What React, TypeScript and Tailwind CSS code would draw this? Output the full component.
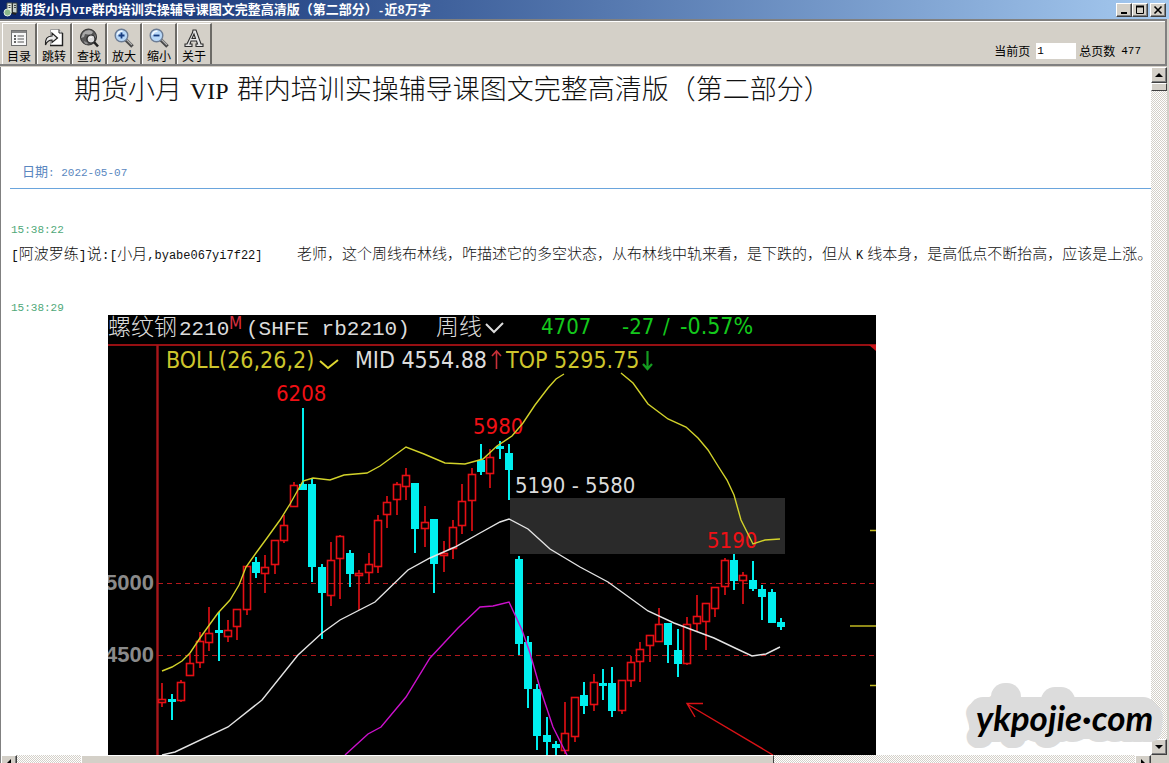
import type { ReactNode } from "react";

interface ToolButtonProps {
  label: string;
  children: ReactNode;
}

// [direction, body top, body bottom, wick top, wick bottom]
type Candle = ["up" | "down", number, number, number, number];

const candles: Candle[] = [
  ["up", 699, 703, 683, 707],
  ["down", 699, 701, 694, 720],
  ["up", 682, 701, 680, 702],
  ["up", 663, 676, 654, 676],
  ["up", 641, 663, 632, 668],
  ["up", 633, 643, 607, 651],
  ["down", 630, 632, 612, 661],
  ["up", 630, 637, 620, 642],
  ["up", 609, 627, 609, 640],
  ["up", 566, 610, 566, 615],
  ["down", 562, 573, 557, 578],
  ["up", 567, 574, 555, 593],
  ["up", 540, 565, 540, 574],
  ["up", 525, 541, 515, 543],
  ["up", 485, 507, 482, 507],
  ["down", 484, 490, 408, 490],
  ["down", 484, 567, 478, 582],
  ["down", 567, 593, 564, 639],
  ["up", 560, 596, 542, 606],
  ["up", 536, 559, 535, 599],
  ["down", 553, 574, 550, 587],
  ["up", 573, 575, 570, 610],
  ["up", 564, 573, 553, 583],
  ["up", 520, 567, 515, 573],
  ["up", 502, 515, 496, 528],
  ["up", 484, 500, 482, 515],
  ["up", 475, 487, 468, 500],
  ["down", 483, 529, 483, 553],
  ["up", 522, 529, 506, 547],
  ["down", 519, 564, 519, 593],
  ["up", 553, 555, 541, 572],
  ["up", 527, 549, 520, 559],
  ["up", 501, 526, 484, 534],
  ["up", 474, 501, 468, 531],
  ["down", 460, 472, 444, 475],
  ["up", 457, 474, 449, 488],
  ["down", 446, 448, 441, 459],
  ["down", 453, 470, 444, 500],
  ["down", 559, 644, 556, 655],
  ["down", 642, 689, 636, 708],
  ["down", 689, 736, 684, 750],
  ["down", 735, 742, 717, 756],
  ["down", 744, 748, 741, 756],
  ["up", 733, 751, 702, 754],
  ["up", 697, 737, 697, 742],
  ["down", 695, 706, 682, 714],
  ["up", 682, 705, 674, 711],
  ["down", 683, 685, 669, 700],
  ["down", 683, 711, 667, 717],
  ["up", 680, 711, 680, 714],
  ["up", 662, 681, 656, 687],
  ["up", 649, 662, 642, 682],
  ["up", 635, 646, 635, 662],
  ["up", 624, 642, 608, 642],
  ["down", 623, 645, 623, 663],
  ["down", 650, 664, 629, 677],
  ["up", 624, 664, 617, 665],
  ["up", 616, 624, 595, 632],
  ["up", 603, 622, 603, 650],
  ["up", 587, 609, 587, 617],
  ["up", 560, 587, 558, 595],
  ["down", 560, 581, 554, 590],
  ["up", 575, 581, 572, 604],
  ["down", 580, 589, 561, 591],
  ["down", 589, 597, 585, 620],
  ["down", 592, 623, 589, 623],
  ["down", 622, 627, 618, 630],
];

const upperBand =
  "162,671 172,667 182,661 190,653 200,638 210,624 218,613 230,600 239,585 246,567 256,553 267,538 280,520 290,504 303,481 313,478 330,480 344,475 367,473 380,466 406,447 424,454 445,463 465,464 483,459 497,446 512,436 523,423 535,405 548,388 556,379 564,374";
const upperBandTail =
  "621,373 633,383 648,404 668,419 686,427 698,438 708,450 718,466 727,480 734,495 741,520 753,544 765,540 780,539";
const middleBand =
  "162,755 175,752 228,727 262,700 298,655 322,633 340,620 375,602 408,570 430,558 455,547 480,533 500,522 509,519 528,529 550,549 580,567 608,582 648,611 674,623 714,638 735,648 752,656 766,654 780,647";
const lowerBand =
  "345,755 368,734 381,727 406,697 430,658 458,628 480,607 493,606 509,602 522,630 530,653 540,688 553,727 567,755";

function CandleShape({ candle, index }: { candle: Candle; index: number }) {
  const [dir, top, bottom, high, low] = candle;
  const x = Math.round(162.3 + index * 9.374);

  if (dir === "down") {
    return (
      <g fill="#00efef">
        <rect x={x - 1} y={high} width="2" height={low - high} />
        <rect x={x - 4} y={top} width="8" height={Math.max(bottom - top, 3)} />
      </g>
    );
  }
  return (
    <g stroke="#e60f14" strokeWidth="1.6" fill="none">
      <path d={`M${x} ${high}V${top}M${x} ${bottom}V${low}`} />
      <rect x={x - 3.5} y={top + 0.5} width="7" height={Math.max(bottom - top - 1, 2)} />
    </g>
  );
}

function FuturesChart() {
  return (
    <svg
      className="block shrink-0 bg-black font-['DejaVu_Sans_Condensed','Noto_Sans',sans-serif]"
      width="768"
      height="440"
      viewBox="108 315 768 440"
      role="img"
      aria-label="螺纹钢2210 周线"
    >
      <rect x="510" y="498" width="275" height="56" fill="#2a2a2a" />
      <g stroke="#b4181c" strokeWidth="1.2" strokeDasharray="5 4">
        <path d="M158 583.5H876" />
        <path d="M158 655.5H876" />
      </g>
      <path d="M108 345H876" stroke="#c81418" strokeWidth="1.6" />
      <path d="M157.5 345V755" stroke="#a8161a" strokeWidth="2.4" />
      <path d="M869 345H876V351Z" fill="#c81418" />

      <g fill="#8a8a8a" fontSize="22" fontWeight="700" fontFamily="Liberation Sans, sans-serif">
        <text x="105" y="590">5000</text>
        <text x="105" y="662">4500</text>
      </g>

      {candles.map((candle, i) => (
        <CandleShape key={i} candle={candle} index={i} />
      ))}

      <g fill="#f01015" fontSize="22">
        <text x="276" y="401">6208</text>
        <text x="473" y="434">5980</text>
        <text x="707" y="548">5190</text>
      </g>

      <g fill="none" strokeWidth="1.4">
        <polyline points={upperBand} stroke="#d2d22a" />
        <polyline points={upperBandTail} stroke="#d2d22a" />
        <polyline points={middleBand} stroke="#e4e4e4" />
        <polyline points={lowerBand} stroke="#cc10cc" />
      </g>
      <g stroke="#c0b820" strokeWidth="1.6">
        <path d="M870 530.5H876M850 626H876M870 685.5H876" />
      </g>
      <path d="M773 755L687 704M703 703.5H687L695 717" stroke="#d81216" strokeWidth="1.4" fill="none" />

      <g fill="#dcdcdc">
        <text x="108" y="335" fontSize="23" fontFamily="Noto Sans CJK SC, sans-serif" fontWeight="300">
          螺纹钢
        </text>
        <text x="179" y="335" fontSize="21" fontFamily="Liberation Mono, monospace">2210</text>
        <text x="246" y="335" fontSize="21" fontFamily="Liberation Mono, monospace">(SHFE rb2210)</text>
        <text x="436" y="335" fontSize="23" fontFamily="Noto Sans CJK SC, sans-serif" fontWeight="300">
          周线
        </text>
        <text x="355" y="368" fontSize="23">MID 4554.88</text>
        <text x="515" y="493" fontSize="22">5190 - 5580</text>
      </g>
      <text x="229" y="329" fontSize="17" fill="#d83040">M</text>
      <path d="M486 324L494 332L503 323" stroke="#dcdcdc" strokeWidth="2" fill="none" />
      <g fill="#14c81c" fontSize="22">
        <text x="541" y="334">4707</text>
        <text x="622" y="334">-27</text>
        <text x="663" y="334">/</text>
        <text x="680" y="334" fontSize="23">-0.57%</text>
      </g>
      <g fill="#cdc52c" fontSize="23">
        <text x="166" y="368">BOLL(26,26,2)</text>
        <text x="506" y="368">TOP 5295.75</text>
      </g>
      <path d="M320 361L328 368L338 360" stroke="#e0d830" strokeWidth="2" fill="none" />
      <path d="M496.500 369V352M492 356L496.500 351L501 356" stroke="#c83038" strokeWidth="1.6" fill="none" />
      <path d="M647.500 351V368M643 364L647.500 369L652 364" stroke="#149c20" strokeWidth="2.2" fill="none" />
    </svg>
  );
}

function AppIcon() {
  return (
    <svg width="16" height="16" viewBox="0 0 16 16" aria-hidden="true">
      <path d="M4 1h5v10H4z" fill="#e8ece4" stroke="#505850" />
      <path d="M9.500 1h4.500v10H9.500z" fill="#c4ccc8" stroke="#303838" />
      <path d="M5.500 3.500h2M5.500 5.500h2M11 3.500h2M11 5.500h2" stroke="#404848" />
      <circle cx="4.500" cy="10.500" r="3.500" fill="#8cb88c" stroke="#e4f0e4" />
      <path d="M9 11l4 1" stroke="#202020" strokeWidth="2" />
    </svg>
  );
}

function ContentsIcon() {
  return (
    <svg width="20" height="20" viewBox="0 0 20 20" aria-hidden="true">
      <rect x="2.500" y="2.500" width="15" height="15" fill="#f8f8f8" stroke="#707070" />
      <path d="M3 4h14" stroke="#888" strokeWidth="2" />
      <path d="M5 8h2M5 11h2M5 14h2" stroke="#333" strokeWidth="1.6" />
      <path d="M8.500 8H15M8.500 11H15M8.500 14H15" stroke="#555" strokeWidth="1.2" />
    </svg>
  );
}

function JumpIcon() {
  return (
    <svg width="20" height="20" viewBox="0 0 20 20" aria-hidden="true">
      <path d="M6.500 1.500H15L18.500 5V17.500H6.500Z" fill="#fff" stroke="#a0a0a0" />
      <path d="M18.500 5V17.500H6" fill="none" stroke="#222" strokeWidth="1.4" />
      <path d="M15 1.500V5H18.500" fill="none" stroke="#222" />
      <path
        d="M1.500 17C1 11 3 8 8 8V5L13.500 10L8 14.500V12C4.500 12 3 13.500 1.500 17Z"
        fill="#ececec"
        stroke="#222"
        strokeWidth="1.2"
      />
    </svg>
  );
}

function FindIcon() {
  return (
    <svg width="20" height="20" viewBox="0 0 20 20" aria-hidden="true">
      <circle cx="9.500" cy="9" r="8" fill="#585858" stroke="#333" />
      <path d="M4 5C6 2 11 1 14 4L12 7L6 6L5 9L2 10Z" fill="#a8a8a8" />
      <path d="M5 13L9 15L8 16.500C6 16 5 15 5 13ZM16 6l1 4-2-1z" fill="#909090" />
      <path d="M15 14L19 18.500" stroke="#222" strokeWidth="2.600" />
      <circle cx="12" cy="11" r="4" fill="#dcdcdc" stroke="#222" strokeWidth="1.2" />
      <path d="M10 10.500C10.500 9.500 12 9 13 9.500" stroke="#fff" fill="none" />
    </svg>
  );
}

function ZoomIcon({ plus }: { plus?: boolean }) {
  return (
    <svg width="20" height="20" viewBox="0 0 20 20" aria-hidden="true">
      <path d="M12 12L18.500 18.500" stroke="#484848" strokeWidth="3.600" />
      <path d="M12.500 11.500L18 17" stroke="#b0b0b0" strokeWidth="1.2" />
      <circle cx="7.500" cy="7.500" r="6.300" fill="#b8d8f8" stroke="#6c7c94" strokeWidth="1.4" />
      <path d="M3.500 7C4 4.500 6 3 8.500 3.300" stroke="#f4faff" strokeWidth="1.6" fill="none" />
      <path d={plus ? "M4.500 7.500H10.500M7.500 4.500V10.500" : "M4.500 7.500H10.500"} stroke="#163c80" strokeWidth="1.8" />
    </svg>
  );
}

function AboutIcon() {
  return (
    <svg width="20" height="20" viewBox="0 0 20 20" aria-hidden="true">
      <path
        d="M9 2H12L17 16H19V18.500H12V16H13.500L12.500 13H7L6 16H8V18.500H1V16H3L8.500 4.500ZM8 10.500H11.500L10 6Z"
        fill="#e4e4e4"
        stroke="#2c2c2c"
        strokeWidth="1.1"
        fillRule="evenodd"
      />
    </svg>
  );
}

function ToolButton({ label, children }: ToolButtonProps) {
  return (
    <button
      type="button"
      className="flex w-[35px] flex-col items-center justify-end border-t border-r-2 border-l border-t-white border-r-[#6c6a66] border-l-white"
    >
      {children}
      <span className="text-xs leading-4 text-black">{label}</span>
    </button>
  );
}

function BevelButton({ label, className = "", children }: ToolButtonProps & { className?: string }) {
  return (
    <button
      type="button"
      aria-label={label}
      className={`flex shrink-0 items-center justify-center border border-t-white border-r-[#404040] border-b-[#404040] border-l-white bg-[#d4d0c8] shadow-[inset_-1px_-1px_0_#808080] ${className}`}
    >
      {children}
    </button>
  );
}

function Arrow({ d }: { d: string }) {
  return (
    <svg width="8" height="8" viewBox="0 0 8 8" aria-hidden="true">
      <path d={d} fill="#000" />
    </svg>
  );
}

function TitleBar() {
  return (
    <header className="flex h-[19px] shrink-0 items-center bg-linear-to-r from-[#0a246a] to-[#a6caf0] px-[3px]">
      <AppIcon />
      <h1 className="ml-px flex-1 text-[13px] leading-[19px] font-bold whitespace-nowrap text-white">
        期货小月
        <span className="font-['Liberation_Mono',monospace] text-[11px]">VIP</span>
        群内培训实操辅导课图文完整高清版（第二部分）
        <span className="font-['Liberation_Mono',monospace] text-[11px]">-</span>近
        <span className="font-['Liberation_Mono',monospace] text-[12px]">8</span>万字
      </h1>
      <BevelButton label="最小化" className="h-[14px] w-4">
        <svg width="10" height="10" viewBox="0 0 10 10" aria-hidden="true">
          <path d="M2 8H8" stroke="#000" strokeWidth="2" />
        </svg>
      </BevelButton>
      <BevelButton label="最大化" className="h-[14px] w-4">
        <svg width="10" height="10" viewBox="0 0 10 10" aria-hidden="true">
          <path d="M1.500 1V8.500H8.500V1" stroke="#000" fill="none" />
          <path d="M1 1.500H9" stroke="#000" strokeWidth="2" />
        </svg>
      </BevelButton>
      <BevelButton label="关闭" className="ml-0.5 h-[14px] w-4">
        <svg width="10" height="10" viewBox="0 0 10 10" aria-hidden="true">
          <path d="M1.500 1.500L8.500 8.500M8.500 1.500L1.500 8.500" stroke="#000" strokeWidth="1.6" />
        </svg>
      </BevelButton>
    </header>
  );
}

function Toolbar() {
  return (
    <div className="mr-0.5 flex h-[47px] shrink-0 border-t-2 border-r-2 border-b-2 border-[#808080] bg-[#d4d0c8]">
      <div className="flex flex-1 justify-between border-t border-white pt-px pl-0.5">
        <nav className="flex" aria-label="工具栏">
          <ToolButton label="目录">
            <ContentsIcon />
          </ToolButton>
          <ToolButton label="跳转">
            <JumpIcon />
          </ToolButton>
          <ToolButton label="查找">
            <FindIcon />
          </ToolButton>
          <ToolButton label="放大">
            <ZoomIcon plus />
          </ToolButton>
          <ToolButton label="缩小">
            <ZoomIcon />
          </ToolButton>
          <ToolButton label="关于">
            <AboutIcon />
          </ToolButton>
        </nav>
        <div className="mt-5 mr-6 flex h-4 items-center text-xs leading-4">
          <label htmlFor="page" className="mr-1.5">
            当前页
          </label>
          <input
            id="page"
            defaultValue="1"
            className="mr-[3px] h-4 w-10 bg-white pl-px font-['Liberation_Mono',monospace] text-[11px] outline-none"
          />
          <span>总页数</span>
          <span className="ml-1.5 font-['Liberation_Mono',monospace] text-[11px]">477</span>
        </div>
      </div>
    </div>
  );
}

function Watermark() {
  return (
    <svg
      className="pointer-events-none absolute right-1.5 bottom-1.5 font-['Lato','Open_Sans',sans-serif]"
      width="204"
      height="78"
      viewBox="0 0 204 78"
      aria-label="ykpojie.com"
    >
      <g fill="#dcdcdc">
        <rect x="10" y="18" width="188" height="42" rx="14" />
        <rect x="32" y="4" width="30" height="40" rx="14" />
        <rect x="82" y="8" width="34" height="40" rx="14" />
      </g>
      <text
        x="17"
        y="52"
        fontSize="35"
        fontStyle="italic"
        fontWeight="700"
        fill="#000"
        stroke="#dcdcdc"
        strokeWidth="22"
        strokeLinejoin="round"
        paintOrder="stroke"
      >
        ykpojie·com
      </text>
    </svg>
  );
}

export default function App() {
  return (
    <div className="relative flex h-screen flex-col overflow-hidden bg-[#d4d0c8] font-['Noto_Sans_CJK_SC',sans-serif] text-black">
      <TitleBar />
      <Toolbar />

      <div className="mt-px mr-0.5 flex min-h-0 flex-1 border-l border-[#808080]">
        <main className="min-w-0 flex-1 overflow-hidden bg-white pl-[9px]">
          <h2 className="pt-px pl-16 text-[27px] leading-10 font-light whitespace-nowrap text-[#111]">
            期货小月
            <span className="mx-2 font-['Liberation_Serif',serif] text-[24px]">VIP</span>
            群内培训实操辅导课图文完整高清版（第二部分）
          </h2>
          <p className="mt-[50px] border-b border-[#6aa5dd] pb-[5px] pl-3 text-[13px] leading-5 text-[#5a87c0]">
            日期
            <span className="font-['Liberation_Mono',monospace] text-[11px]">: 2022-05-07</span>
          </p>
          <time className="mt-[31px] block pl-px font-['Liberation_Mono',monospace] text-[11px] leading-5 text-[#4fa878]">
            15:38:22
          </time>
          <p className="mt-px flex pl-px text-[15px] leading-6 font-light whitespace-nowrap text-[#111]">
            <span className="w-[286px] shrink-0">
              <span className="font-['Liberation_Mono',monospace] text-[13px]">[</span>
              阿波罗练
              <span className="font-['Liberation_Mono',monospace] text-[13px]">]</span>说
              <span className="font-['Liberation_Mono',monospace] text-[13px]">:[</span>小月
              <span className="font-['Liberation_Mono',monospace] text-[12px]">,byabe067yi7f22]</span>
            </span>
            <span>
              老师，这个周线布林线，咋描述它的多空状态，从布林线中轨来看，是下跌的，但从
              <span className="mx-1 font-['Liberation_Mono',monospace] text-[12px]">K</span>
              线本身，是高低点不断抬高，应该是上涨。
            </span>
          </p>
          <time className="mt-[30px] block pl-px font-['Liberation_Mono',monospace] text-[11px] leading-5 text-[#4fa878]">
            15:38:29
          </time>
          <div className="-mt-[3px] pl-[98px]">
            <FuturesChart />
          </div>
        </main>

        <div className="flex w-4 shrink-0 flex-col bg-[repeating-conic-gradient(#ffffff_0_25%,#d4d0c8_0_50%)] bg-[length:2px_2px]">
          <BevelButton label="向上滚动" className="h-4 w-4">
            <Arrow d="M0 6L4 2L8 6Z" />
          </BevelButton>
          <div className="h-2 border border-t-white border-r-[#404040] border-b-[#404040] border-l-white bg-[#d4d0c8]" />
          <div className="flex-1" />
          <BevelButton label="向下滚动" className="h-4 w-4">
            <Arrow d="M0 2L4 6L8 2Z" />
          </BevelButton>
        </div>
      </div>

      {/* the lower half of the bar hangs below the window edge */}
      <div className="mr-0.5 -mb-2 flex h-4 shrink-0 border-l border-[#808080] bg-[repeating-conic-gradient(#ffffff_0_25%,#d4d0c8_0_50%)] bg-[length:2px_2px]">
        <BevelButton label="向左滚动" className="h-4 w-4">
          <Arrow d="M6 0L2 4L6 8Z" />
        </BevelButton>
        <div className="flex flex-1">
          <div className="w-16" />
          <div className="w-[62%] border border-t-white border-r-[#404040] border-b-[#404040] border-l-white bg-[#d4d0c8]" />
        </div>
        <BevelButton label="向右滚动" className="h-4 w-4">
          <Arrow d="M2 0L6 4L2 8Z" />
        </BevelButton>
        <div className="w-4 bg-[#d4d0c8]" />
      </div>

      <Watermark />
    </div>
  );
}
